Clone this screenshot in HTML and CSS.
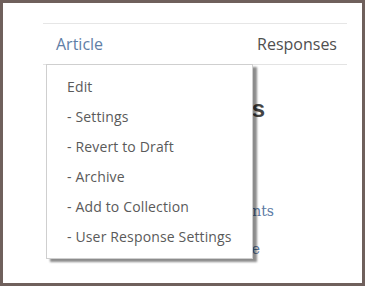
FILE: index.html
```html
<!DOCTYPE html>
<html lang="en">
<head>
  <meta charset="UTF-8">
  <title>Article menu</title>
  <link rel="stylesheet" href="styles.css">
</head>
<body>
  <div class="frame">
    <nav class="tabs">
      <a class="tab tab-active" href="#">Article</a>
      <a class="tab" href="#">Responses</a>
    </nav>

    <section class="panel">
      <h2 class="panel-title">Actions</h2>
      <ul class="panel-links">
        <li><a class="link-comments" href="#">Comments</a></li>
        <li><a class="link-profile" href="#">Profile</a></li>
      </ul>
    </section>

    <ul class="menu">
      <li>Edit</li>
      <li>- Settings</li>
      <li>- Revert to Draft</li>
      <li>- Archive</li>
      <li>- Add to Collection</li>
      <li>- User Response Settings</li>
    </ul>
  </div>
</body>
</html>
```

FILE: styles.css
```css
* { margin: 0; padding: 0; box-sizing: border-box; }

body {
  background: #fff;
  font-family: 'Open Sans', 'Liberation Sans', sans-serif;
}

.frame {
  position: relative;
  width: 365px;
  height: 286px;
  border: 3px solid #6f605c;
  padding-top: 20px;
  overflow: hidden;
}

.tabs {
  display: flex;
  justify-content: space-between;
  margin-left: 40px;
  width: 304px;
  height: 42px;
  padding: 0 10px 0 13px;
  border-top: 1px solid #e6e6e6;
  border-bottom: 1px solid #e3e3e3;
  align-items: center;
}

.tab {
  font-size: 16px;
  color: #4f4f4f;
  text-decoration: none;
}

.tab-active {
  color: #5f7ea6;
}

.panel {
  width: 262px;
  text-align: right;
}

.panel-title {
  margin-top: 30px;
  font-family: 'Liberation Sans', sans-serif;
  font-size: 24px;
  color: #444;
}

.panel-links {
  list-style: none;
  margin-top: 69px;
  font-family: 'DejaVu Serif', serif;
  font-size: 14px;
  line-height: 38px;
}

.panel-links a {
  color: #5b7aa4;
  text-decoration: none;
}

.link-comments {
  margin-right: -9px;
}

.link-profile {
  margin-right: 5px;
  color: #3e5d86;
}

.menu {
  position: absolute;
  top: 61px;
  left: 43px;
  width: 207px;
  padding: 7px 0 6px;
  list-style: none;
  background: #fff;
  border: 1px solid #cfcfcf;
  box-shadow: 4px 3px 2px rgba(0, 0, 0, 0.45);
}

.menu li {
  padding-left: 20px;
  font-size: 14px;
  line-height: 30px;
  letter-spacing: 0.15px;
  color: #5a5a5a;
}
```
